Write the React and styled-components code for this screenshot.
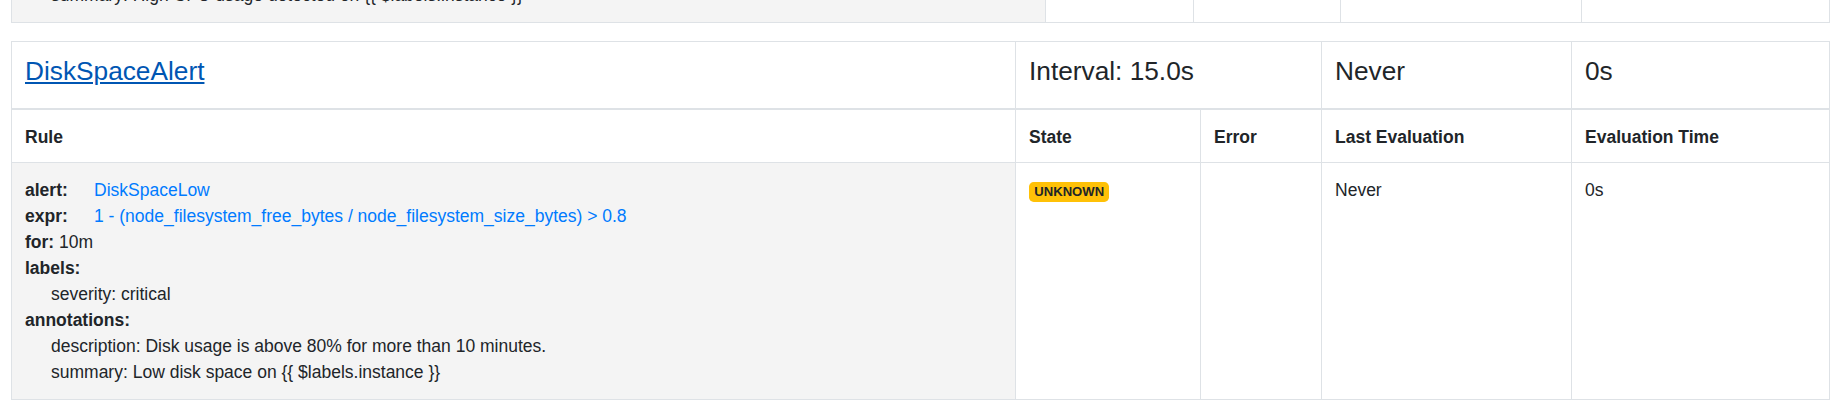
import React from 'react';
import styled, { createGlobalStyle } from 'styled-components';

const GlobalStyle = createGlobalStyle`
  html, body {
    margin: 0;
    background: #fff;
  }
  body {
    font-family: "Liberation Sans", Arial, sans-serif;
    font-size: 17.5px;
    line-height: 26px;
    color: #212529;
    overflow: hidden;
  }
`;

const Page = styled.div`
  padding: 0 0 0 11px;
  width: 1818px;
`;

const Table = styled.table`
  width: 1818px;
  border-collapse: collapse;
  table-layout: fixed;
  margin: ${(p) => (p.$first ? '-33px 0 18px' : '0 0 18px')};
`;

const TitleCell = styled.td`
  border: 1px solid #dee2e6;
  border-bottom-width: 2px;
  padding: 14px 13px 20.5px;
  vertical-align: top;
`;

const Title = styled.h4`
  margin: 0;
  font-size: 26.25px;
  font-weight: 500;
  line-height: 1.2;
`;

const TitleLink = styled.a`
  color: #0056b3;
  text-decoration: underline;
`;

const HeadCell = styled.th`
  border: 1px solid #dee2e6;
  padding: 14px 13px 12px;
  text-align: left;
  font-weight: 700;
  vertical-align: top;
`;

const Cell = styled.td`
  border: 1px solid #dee2e6;
  padding: 14px 13px;
  vertical-align: top;
  background: ${(p) => (p.$shaded ? '#f4f4f4' : '#fff')};
`;

const Line = styled.div`
  white-space: nowrap;
  padding-left: ${(p) => (p.$nested ? '26px' : '0')};
`;

const Key = styled.strong`
  display: ${(p) => (p.$aligned ? 'inline-block' : 'inline')};
  width: ${(p) => (p.$aligned ? '69px' : 'auto')};
  font-weight: 700;
`;

const RuleLink = styled.a`
  color: #007bff;
  text-decoration: none;
`;

const Badge = styled.span`
  display: inline-block;
  padding: 3.5px 5.3px;
  font-size: 13.1px;
  font-weight: 700;
  line-height: 1;
  border-radius: 4.7px;
  background: #ffc107;
  color: #212529;
  vertical-align: baseline;
`;

const prevCols = [1034, 148, 147, 241, 248];
const cols = [1004, 185, 121, 250, 258];

const Cols = ({ widths }) => (
  <colgroup>
    {widths.map((w, i) => (
      <col key={i} style={{ width: w }} />
    ))}
  </colgroup>
);

const rule = {
  alert: 'DiskSpaceLow',
  expr: '1 - (node_filesystem_free_bytes / node_filesystem_size_bytes) > 0.8',
  for: '10m',
  labels: [['severity', 'critical']],
  annotations: [
    ['description', 'Disk usage is above 80% for more than 10 minutes.'],
    ['summary', 'Low disk space on {{ $labels.instance }}'],
  ],
};

const RuleText = ({ r }) => (
  <>
    <Line>
      <Key $aligned>alert:</Key>
      <RuleLink href="#">{r.alert}</RuleLink>
    </Line>
    <Line>
      <Key $aligned>expr:</Key>
      <RuleLink href="#">{r.expr}</RuleLink>
    </Line>
    <Line>
      <Key>for:</Key> {r.for}
    </Line>
    <Line>
      <Key>labels:</Key>
    </Line>
    {r.labels.map(([k, v]) => (
      <Line key={k} $nested>
        {k}: {v}
      </Line>
    ))}
    <Line>
      <Key>annotations:</Key>
    </Line>
    {r.annotations.map(([k, v]) => (
      <Line key={k} $nested>
        {k}: {v}
      </Line>
    ))}
  </>
);

const App = () => (
  <Page>
    <GlobalStyle />
    <Table $first>
      <Cols widths={prevCols} />
      <tbody>
        <tr>
          <Cell $shaded>
            <Line $nested>summary: High CPU usage detected on {'{{ $labels.instance }}'}</Line>
          </Cell>
          <Cell />
          <Cell />
          <Cell />
          <Cell />
        </tr>
      </tbody>
    </Table>

    <Table>
      <Cols widths={cols} />
      <thead>
        <tr>
          <TitleCell>
            <Title>
              <TitleLink href="#">DiskSpaceAlert</TitleLink>
            </Title>
          </TitleCell>
          <TitleCell colSpan={2}>
            <Title>Interval: 15.0s</Title>
          </TitleCell>
          <TitleCell>
            <Title>Never</Title>
          </TitleCell>
          <TitleCell>
            <Title>0s</Title>
          </TitleCell>
        </tr>
        <tr>
          <HeadCell>Rule</HeadCell>
          <HeadCell>State</HeadCell>
          <HeadCell>Error</HeadCell>
          <HeadCell>Last Evaluation</HeadCell>
          <HeadCell>Evaluation Time</HeadCell>
        </tr>
      </thead>
      <tbody>
        <tr>
          <Cell $shaded>
            <RuleText r={rule} />
          </Cell>
          <Cell>
            <Badge>UNKNOWN</Badge>
          </Cell>
          <Cell />
          <Cell>Never</Cell>
          <Cell>0s</Cell>
        </tr>
      </tbody>
    </Table>
  </Page>
);

export default App;
